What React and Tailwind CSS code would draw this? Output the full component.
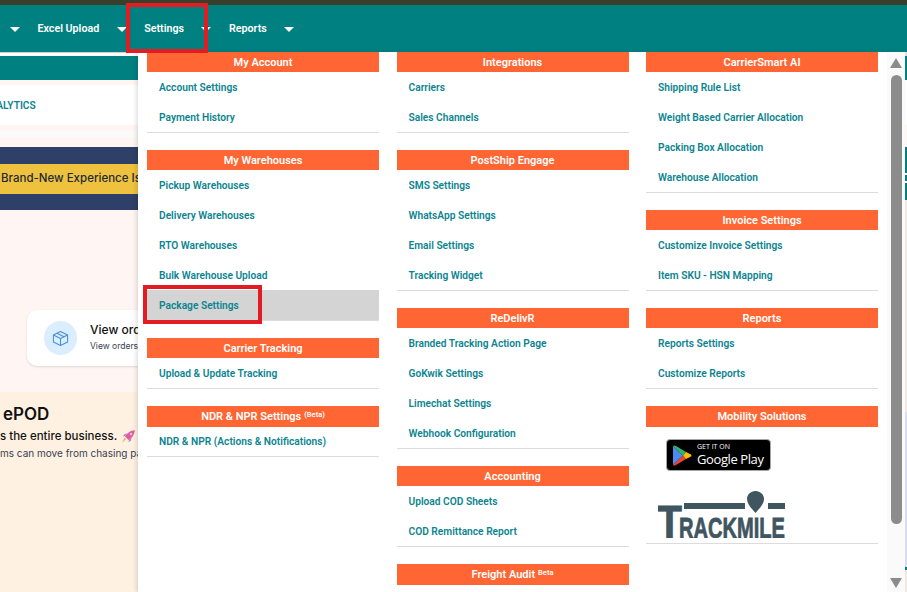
const columns = [
  [
    { title: "My Account", links: ["Account Settings", "Payment History"] },
    { title: "My Warehouses", links: ["Pickup Warehouses", "Delivery Warehouses", "RTO Warehouses", "Bulk Warehouse Upload", "Package Settings"] },
    { title: "Carrier Tracking", links: ["Upload & Update Tracking"] },
    { title: "NDR & NPR Settings", sup: "(Beta)", links: ["NDR & NPR (Actions & Notifications)"] },
  ],
  [
    { title: "Integrations", links: ["Carriers", "Sales Channels"] },
    { title: "PostShip Engage", links: ["SMS Settings", "WhatsApp Settings", "Email Settings", "Tracking Widget"] },
    { title: "ReDelivR", links: ["Branded Tracking Action Page", "GoKwik Settings", "Limechat Settings", "Webhook Configuration"] },
    { title: "Accounting", links: ["Upload COD Sheets", "COD Remittance Report"] },
    { title: "Freight Audit", sup: "Beta", links: [] },
  ],
  [
    { title: "CarrierSmart AI", links: ["Shipping Rule List", "Weight Based Carrier Allocation", "Packing Box Allocation", "Warehouse Allocation"] },
    { title: "Invoice Settings", links: ["Customize Invoice Settings", "Item SKU - HSN Mapping"] },
    { title: "Reports", links: ["Reports Settings", "Customize Reports"] },
    { title: "Mobility Solutions", links: [], mobility: true },
  ],
];

const Caret = () => <span className="w-0 h-0 border-x-[5px] border-x-transparent border-t-[5px] border-t-white shrink-0" />;

function GooglePlay() {
  return (
    <div className="ml-5 w-[105px] h-8 bg-black rounded-[4px] border border-[#a6a6a6] flex items-center pl-[6px] gap-[5px]">
      <svg width="19" height="21" viewBox="0 0 19 21" className="shrink-0">
        <path d="M0 1 L10 10.5 L0 20 Z" fill="#4a8df0" />
        <path d="M0 1 Q1 0 3 1 L13 7 L10 10.5 Z" fill="#34b568" />
        <path d="M0 20 Q1 21 3 20 L13 14 L10 10.5 Z" fill="#ea4335" />
        <path d="M13 7 L18 9.5 Q19 10.5 18 11.5 L13 14 L10 10.5 Z" fill="#fbbc04" />
      </svg>
      <div className="flex flex-col text-white font-['Open_Sans',sans-serif] leading-none">
        <span className="text-[7px] leading-[8px]">GET IT ON</span>
        <span className="text-[13px] leading-[16px] tracking-[-0.4px] whitespace-nowrap">Google Play</span>
      </div>
    </div>
  );
}

function Trackmile() {
  return (
    <svg width="128" height="47" viewBox="0 0 128 47" className="ml-3 mt-[20px] block" fill="#3f555f" stroke="none">
      <rect x="26" y="12" width="61" height="6" />
      <rect x="110" y="12" width="17" height="6" />
      <path d="M97.5 0 C92.5 0 89 3.800 89 8 C89 13 94 18 97.500 22 C101 18 106 13 106 8 C106 3.800 102.500 0 97.500 0 Z" />
      <text x="-1" y="46.500" textLength="25" lengthAdjust="spacingAndGlyphs" fontFamily="'Liberation Sans',sans-serif" fontWeight="700" fontSize="47" stroke="#3f555f" strokeWidth="0.8">T</text>
      <text x="21" y="46.500" textLength="106" lengthAdjust="spacingAndGlyphs" fontFamily="'Liberation Sans',sans-serif" fontWeight="700" fontSize="30" stroke="#3f555f" strokeWidth="0.8">RACKMILE</text>
    </svg>
  );
}

function Section({ s }) {
  const hasBorder = s.links.length > 0 || s.mobility;
  return (
    <div className="mb-[17px]">
      <div className={`bg-[#ff6633] text-white text-center text-[11px] font-semibold flex items-center justify-center pt-[2px] ${s.sup || s.mobility ? "h-[21px]" : "h-5"}`}>
        <span>{s.title}{s.sup && <sup className="text-[7.5px] ml-[3px] top-[-3px]">{s.sup}</sup>}</span>
      </div>
      {s.links.map((l) => (
        <div key={l} className={`flex items-center pl-3 text-[10.2px] font-semibold text-[#0b8490] whitespace-nowrap ${s.sup ? "h-[29px]" : "h-[30px] pt-px"} ${l === "Package Settings" ? "bg-[#d4d4d4]" : ""}`}>{l}</div>
      ))}
      {s.mobility && (
        <div className="h-[116px] pt-3">
          <GooglePlay />
          <Trackmile />
        </div>
      )}
      {hasBorder && <div className="h-px bg-[#dcdcdc]" />}
    </div>
  );
}

export default function App() {
  return (
    <div className="relative w-[907px] h-[592px] overflow-hidden flex flex-col bg-white font-['Roboto',sans-serif]">
      <div className="h-[5px] bg-[#3a3f2c] shrink-0" />
      <nav className="h-[47px] bg-[#008080] shrink-0 flex items-center pl-[10px] pt-px gap-[17.5px] text-[10.7px] font-semibold text-white">
        <Caret />
        <span>Excel Upload</span>
        <Caret />
        <span>Settings</span>
        <Caret />
        <span>Reports</span>
        <Caret />
      </nav>
      <div className="flex flex-1 min-h-0">
        <div className="w-[138px] shrink-0 overflow-hidden flex flex-col bg-[#fff5f3]">
          <div className="h-1 shrink-0 bg-white border-t border-[#d0d0d0]" />
          <div className="h-6 shrink-0 bg-[#008080]" />
          <div className="h-[5px] shrink-0" />
          <div className="h-10 shrink-0 bg-white flex items-center text-[10.2px] font-semibold text-[#0b8490] whitespace-nowrap pt-px"><span className="-ml-[11px]">NALYTICS</span></div>
          <div className="h-[6px] shrink-0" />
          <div className="h-[6px] shrink-0 bg-[#fafafa]" />
          <div className="h-[10px] shrink-0" />
          <div className="h-[63px] shrink-0 bg-[#2f4068] flex items-center">
            <div className="w-full h-[30px] bg-[#eec23e] flex items-center pl-px text-[11.5px] font-medium text-[#1f2937] whitespace-nowrap overflow-hidden font-['Inter',sans-serif]">Brand-New Experience Is</div>
          </div>
          <div className="h-[100px] shrink-0" />
          <div className="h-[56px] ml-[27px] w-[140px] shrink-0 bg-white rounded-[10px] flex items-center pl-[17px] gap-[13px] shadow-sm font-['Inter',sans-serif]">
            <div className="w-[33px] h-[34px] rounded-full bg-[#dbeeff] flex items-center justify-center shrink-0">
              <svg width="17" height="17" viewBox="0 0 24 24" fill="none" stroke="#4a90d9" strokeWidth="1.500" strokeLinejoin="round">
                <path d="M12 2 L22 7 L22 17 L12 22 L2 17 L2 7 Z" />
                <path d="M2 7 L12 12 L22 7 M12 12 L12 22 M7 4.500 L17 9.500" />
              </svg>
            </div>
            <div className="flex flex-col whitespace-nowrap pb-[3px]">
              <span className="text-[12px] font-medium leading-[18px] text-[#111]">View orders</span>
              <span className="text-[8.5px] leading-[14px] text-[#374151]">View orders</span>
            </div>
          </div>
          <div className="h-[26px] shrink-0" />
          <div className="flex-1 bg-[#fef1e2] whitespace-nowrap pt-[12px] font-['Inter',sans-serif]">
            <div className="text-[17px] font-semibold leading-[21px] text-[#111] pl-[3px]">ePOD</div>
            <div className="flex items-center text-[11.5px] font-medium leading-[20px] text-[#111] mt-px">
              <span>s the entire business.</span>
              <svg width="13" height="13" viewBox="0 0 13 13" className="ml-[5px] shrink-0">
                <path d="M12.800 0.200 C9 0.500 5 2.500 3 6.500 L6.500 10 C10.500 8 12.500 4 12.800 0.200 Z" fill="#e85b9a" />
                <path d="M3.200 6 L0.800 6.500 L2.500 4 L5 3.500 Z M7 9.800 L6.500 12.200 L9 10.500 L9.500 8 Z" fill="#a78bc0" />
                <circle cx="9" cy="4" r="1.300" fill="#b9c7e8" />
                <path d="M4 9 L0.300 12.700 L2.500 8 Z" fill="#f5a623" />
              </svg>
            </div>
            <div className="text-[10px] leading-[14px] text-[#374151]">ms can move from chasing pa</div>
          </div>
        </div>
        <div className="flex-1 bg-white flex min-w-0 shadow-[-2px_0_4px_rgba(0,0,0,0.12)] z-10 overflow-hidden">
          <div className="flex flex-1 pl-[9px] gap-[17.5px]">
            {columns.map((c, i) => (
              <div key={i} className="w-[232px] shrink-0">
                {c.map((s) => <Section key={s.title} s={s} />)}
              </div>
            ))}
          </div>
          <div className="w-[18px] shrink-0 bg-[#fafafa] flex flex-col items-center pt-[6px] pb-1 ml-[9px]">
            <div className="w-0 h-0 border-x-[6.500px] border-x-transparent border-b-[10px] border-b-[#8c8c8c]" />
            <div className="w-[11px] h-[449px] mt-[7px] rounded-full bg-[#8c8c8c]" />
            <div className="flex-1" />
            <div className="w-0 h-0 border-x-[6.500px] border-x-transparent border-t-[10px] border-t-[#8c8c8c]" />
          </div>
          <div className="w-[2px] shrink-0 flex flex-col bg-[#f3e8e0]">
            <div className="h-1 bg-[#e0e0e0]" />
            <div className="h-6 bg-[#008080]" />
            <div className="h-[45px] bg-white" />
            <div className="h-[22px] bg-[#fff5f3]" />
            <div className="h-[26px] bg-[#008080]" />
            <div className="h-[2px] bg-white" />
            <div className="h-[6px] bg-[#008080]" />
            <div className="h-[2px] bg-white" />
            <div className="h-[17px] bg-[#008080]" />
            <div className="h-[212px]" />
            <div className="h-[155px] bg-[#d8dcec]" />
            <div className="h-[3px] bg-[#008080]" />
          </div>
        </div>
      </div>
      <div className="absolute left-[126px] top-[3px] w-[82px] h-[50px] border-[4px] border-[#e31b23] z-20" />
      <div className="absolute left-[143px] top-[285px] w-[119px] h-[39px] border-[4px] border-[#e31b23] z-20" />
    </div>
  );
}
